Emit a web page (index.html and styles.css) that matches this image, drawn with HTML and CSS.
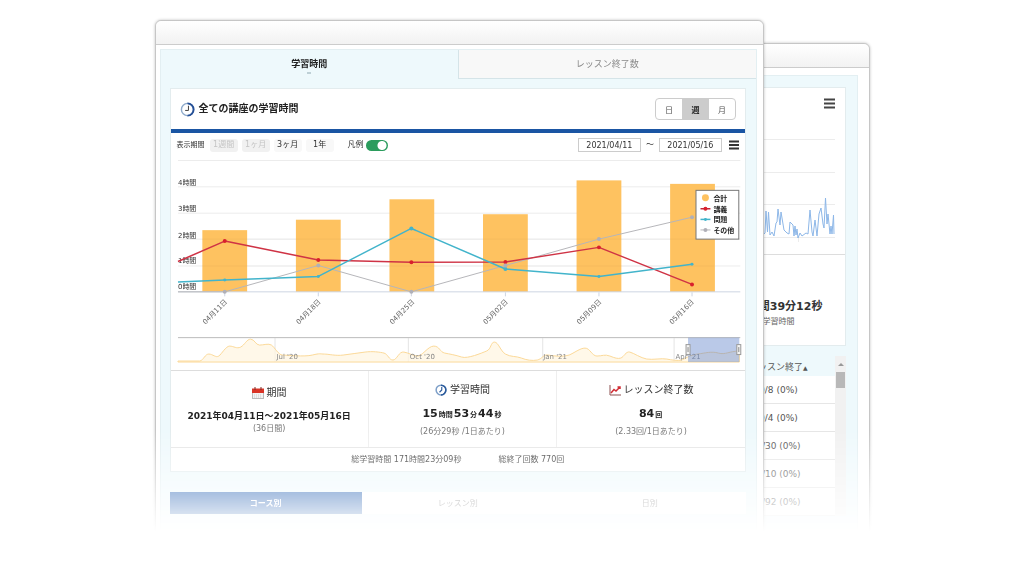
FILE: index.html
```html
<!DOCTYPE html>
<html lang="ja">
<head>
<meta charset="utf-8">
<title>学習時間</title>
<link rel="stylesheet" href="styles.css">
</head>
<body>
<main class="stage">
  <section class="window window-back">
    <div class="titlebar"></div>
    <div class="back-body">
      <div class="back-card">
        <svg class="back-chart" viewBox="676 88 170 166">
          <path d="M825 99.500H836M825 103.500H836M825 107.500H836" stroke="#444" stroke-width="2"/>
          <path d="M676 139.500H836M676 172.500H836M676 204.500H836M676 237.500H836M799.500 237V242" stroke="#ececec"/>
          <path d="M762 225L764 235L766 233L767 211L768.500 232L769.500 212L771 235L773 232L775 236L777 223L778 222L779 209L781 225L782 212L784 224L785 230L788 233L790 234L791 222L794 225L795 236L796 226L797 235L798 229L799 238L801 233L803 236L807 233L809 234L811 210L813 232L814 236L816 220L818 236L820 214L822 208L824 224L825 228L826.500 198L828 224L829 214L831 234L832 226L833 234L834.500 215L835 234" fill="none" stroke="#8db7e8" stroke-linejoin="round"/>
        </svg>
        <div class="back-stat">
          <strong>12時間39分12秒</strong>
          <span>学習時間</span>
        </div>
      </div>
      <div class="back-list">
        <table class="lessons">
          <thead><tr><th>レッスン終了<small>▲</small></th></tr></thead>
          <tbody>
            <tr><td>0/8 (0%)</td></tr>
            <tr><td>0/4 (0%)</td></tr>
            <tr><td>0/30 (0%)</td></tr>
            <tr><td>0/10 (0%)</td></tr>
            <tr><td>0/92 (0%)</td></tr>
          </tbody>
        </table>
        <div class="scroll"><span class="scroll-up"></span><span class="scroll-thumb"></span></div>
      </div>
    </div>
  </section>

  <section class="window window-front">
    <div class="titlebar"></div>
    <div class="front-body">
      <nav class="tabs">
        <button class="tab tab-on">学習時間<span class="caret"></span></button>
        <button class="tab">レッスン終了数</button>
      </nav>
      <article class="card">
        <header class="card-head">
          <svg class="clock" viewBox="0 0 16 16"><circle cx="8" cy="8" r="6.500" fill="#fff" stroke="#8eaacb" stroke-width="1.500"/><path d="M8 1.500a6.500 6.500 0 0 1 0 13" fill="none" stroke="#244f96" stroke-width="2"/><path d="M9 4v5H5.500" fill="none" stroke="#333"/></svg>
          <h1>全ての講座の学習時間</h1>
          <div class="units"><button>日</button><button class="unit-on">週</button><button>月</button></div>
        </header>
        <div class="filters">
          <span class="filter-name">表示期間</span>
          <div class="spans"><button disabled>1週間</button><button disabled>1ヶ月</button><button>3ヶ月</button><button>1年</button></div>
          <label class="legend-switch">凡例<input type="checkbox" checked></label>
          <div class="dates">
            <input type="text" value="2021/04/11" aria-label="開始日"><span>～</span><input type="text" value="2021/05/16" aria-label="終了日">
            <button class="menu" aria-label="メニュー"><svg viewBox="0 0 10 10"><path d="M0 1.500H10M0 5H10M0 8.500H10" stroke="#333" stroke-width="2"/></svg></button>
          </div>
        </div>
        <svg class="chart" viewBox="170 157 577 214">
          <path d="M177 160.500H742M177 187H742M177 213.500H742M177 239.500H742M177 266.500H742" stroke="#ececec"/>
          <g fill="#fec260">
            <rect x="201.500" y="230.500" width="45" height="62"/><rect x="295.500" y="220" width="45" height="72.500"/><rect x="389.500" y="199.500" width="45" height="93"/>
            <rect x="483.500" y="214.500" width="45" height="78"/><rect x="577.500" y="180.500" width="45" height="112"/><rect x="671.500" y="184" width="45" height="108.500"/>
          </g>
          <path d="M201 239.500H716M201 266.500H716" stroke="#000" stroke-opacity=".04"/>
          <path d="M177 292.500H742M224 293v4M318 293v4M411.500 293v4M506 293v4M600 293v4M693.500 293v4" stroke="#cdd5e2"/>
          <g class="axis"><text x="177" y="185">4時間</text><text x="177" y="211">3時間</text><text x="177" y="238">2時間</text><text x="177" y="264">1時間</text><text x="177" y="290">0時間</text></g>
          <g fill="none" stroke-width="1.500" stroke-linejoin="round">
            <path d="M177 292.500H224L318 266L411.500 292.500L506 266L600 239.500L693.500 217.500" stroke="#b5b5b9" stroke-width="1"/>
            <path d="M177 262L224 241.500L318 260.500L411.500 262.800L506 262.500L600 247.800L693.500 285" stroke="#cf3345"/>
            <path d="M177 282.700L224 280.700L318 277L411.500 228.800L506 269.500L600 277L693.500 264.800" stroke="#42b4cb"/>
          </g>
          <g fill="#d9202c"><circle cx="224" cy="241.500" r="2"/><circle cx="318" cy="260.500" r="2"/><circle cx="411.500" cy="262.800" r="2"/><circle cx="506" cy="262.500" r="2"/><circle cx="600" cy="247.800" r="2"/><circle cx="693.500" cy="285" r="2"/></g>
          <g fill="#42b4cb"><circle cx="224" cy="280.700" r="1.500"/><circle cx="318" cy="277" r="1.500"/><circle cx="411.500" cy="228.800" r="2"/><circle cx="506" cy="269.500" r="2"/><circle cx="600" cy="277" r="1.500"/><circle cx="693.500" cy="264.800" r="1.500"/></g>
          <g fill="#b0b0b8"><circle cx="224" cy="292.500" r="2"/><circle cx="318" cy="266" r="2"/><circle cx="411.500" cy="292.500" r="2"/><circle cx="506" cy="266" r="2"/><circle cx="600" cy="239.500" r="2"/><circle cx="693.500" cy="217.500" r="2"/></g>
          <g class="days">
            <text transform="translate(227 303) rotate(-45)">04月11日</text><text transform="translate(321 303) rotate(-45)">04月18日</text><text transform="translate(415 303) rotate(-45)">04月25日</text>
            <text transform="translate(509 303) rotate(-45)">05月02日</text><text transform="translate(603 303) rotate(-45)">05月09日</text><text transform="translate(696 303) rotate(-45)">05月16日</text>
          </g>
          <g class="legend">
            <rect x="697.500" y="190.500" width="43" height="49" fill="#fff" stroke="#777"/>
            <circle cx="707" cy="198" r="3.500" fill="#fec260"/>
            <path d="M702 209H712" stroke="#c52335" stroke-width="1.500"/><circle cx="707" cy="209" r="2" fill="#d9202c"/>
            <path d="M702 219.700H712" stroke="#42b4cb" stroke-width="1.500"/><circle cx="707" cy="219.700" r="1.500" fill="#42b4cb"/>
            <path d="M702 230.300H712" stroke="#b5b5b9"/><circle cx="707" cy="230.300" r="2" fill="#b0b0b8"/>
            <text x="715" y="201">合計</text><text x="715" y="212">講義</text><text x="715" y="222">問題</text><text x="715" y="233">その他</text>
          </g>
          <path d="M274.500 339V363M408.500 339V363M543.500 339V363M675.500 339V363" stroke="#e4e4e4"/>
          <path d="M177 362H199C203 361 204 355 208 355S215 359 218 357S225 347 229 347S236 350 240 348S246 340 250 340S255 346 259 346S268 344 271 346S278 356 282 356S304 358 312 356S320 355 324 355S336 357 343 356S358 354 365 353S380 353 384 354S389 361 393 361S399 352 404 353S412 356 417 357S428 347 434 347S440 353 445 354S456 356 462 358S482 354 487 352S491 343 495 343S501 352 506 355S517 357 522 359S533 362 538 361S544 355 549 356S565 358 570 356S581 349 586 349S593 357 598 357S606 355 611 357S619 360 622 359S627 352 631 353S642 359 648 360S663 359 668 360S680 362 683 361S691 356 699 355S713 352 720 354S731 352 741 352V363H177Z" fill="#fff5e2" fill-opacity=".75" stroke="#fbd998"/>
          <path d="M177 338.500H742" stroke="#bbb"/>
          <g class="months"><text x="276" y="360">Jul '20</text><text x="410" y="360">Oct '20</text><text x="544" y="360">Jan '21</text><text x="677" y="360">Apr '21</text></g>
          <rect x="689.500" y="338.500" width="51.500" height="24.500" fill="#6687cb" fill-opacity=".45"/>
          <g fill="#f4f4f4" stroke="#999"><rect x="687.500" y="345.500" width="4" height="10"/><rect x="738.500" y="345.500" width="4" height="10"/></g>
          <path d="M689.500 348v5M740.500 348v5" stroke="#888"/>
        </svg>
        <div class="stats">
          <section class="stat">
            <h2><svg viewBox="0 0 12 12"><rect x=".5" y="2.500" width="11" height="9" fill="#f3f3f3" stroke="#bbb"/><path d="M0 1.500H12V6H0Z" fill="#d93426"/><path d="M3 0V3M9 0V3" stroke="#7d2a24"/><path d="M2 8H10M2 10H10" stroke="#ccc" stroke-dasharray="1 1"/></svg>期間</h2>
            <p class="period">2021年04月11日～2021年05月16日</p>
            <p class="note">(36日間)</p>
          </section>
          <section class="stat">
            <h2><svg viewBox="0 0 16 16"><circle cx="8" cy="8" r="6.500" fill="#fff" stroke="#7d9fc8" stroke-width="2"/><path d="M8 1.500a6.500 6.500 0 0 1 0 13" fill="none" stroke="#2b5a9b" stroke-width="2"/><path d="M9 4v4L6 11" fill="none" stroke="#2b5a9b" stroke-width="1.500"/></svg>学習時間</h2>
            <p class="total">15<small>時間</small>53<small>分</small>44<small>秒</small></p>
            <p class="note">(26分29秒 /1日あたり)</p>
          </section>
          <section class="stat">
            <h2><svg viewBox="0 0 12 12"><path d="M1 1V11H12" fill="none" stroke="#8d5050"/><path d="M2 9L5 5.500L7 7L11 3M8.500 3H11V5" fill="none" stroke="#d12c34" stroke-width="1.500"/></svg>レッスン終了数</h2>
            <p class="total">84<small>回</small></p>
            <p class="note">(2.33回/1日あたり)</p>
          </section>
        </div>
        <footer class="sums"><span>総学習時間 171時間23分09秒</span><span>総終了回数 770回</span></footer>
      </article>
      <nav class="groups"><button class="group-on">コース別</button><button>レッスン別</button><button>日別</button></nav>
    </div>
  </section>
</main>
</body>
</html>
```

FILE: styles.css
```css
* { box-sizing: border-box; }
body {
  margin: 0;
  background: #fff;
  color: #333;
  font-family: "DejaVu Sans", "Noto Sans CJK JP", sans-serif;
  font-size: 8px;
}
h1, h2, p { margin: 0; }
svg { display: block; flex: none; }
button, input { font: inherit; color: inherit; margin: 0; }
button { padding: 0; border: 0; background: none; }

.stage {
  position: relative;
  height: 540px;
  overflow: hidden;
  -webkit-mask-image: linear-gradient(#000 430px, transparent 532px);
  mask-image: linear-gradient(#000 430px, transparent 532px);
}
.window {
  position: absolute;
  width: 59.5%;
  height: 600px;
  border: 1px solid #c6c6c6;
  border-radius: 6px 6px 0 0;
  background: #fff;
  box-shadow: 0 0 3px rgba(0, 0, 0, .25);
}
.window-back { top: 43px; right: 15%; }
.window-front { top: 20px; left: 15.1%; }
.titlebar {
  height: 24px;
  border-bottom: 1px solid #ccc;
  border-radius: 6px 6px 0 0;
  background: linear-gradient(#fff, #f2f2f2);
}

/* Front window */
.front-body {
  margin: 4px 6px 0 4px;
  padding-bottom: 60px;
  border: 1px solid #e3eff2;
  background: #eef9fc;
}
.tabs { display: flex; height: 29px; }
.tab {
  flex: 1;
  color: #888;
  font-size: 9px;
  line-height: 12px;
  background: #f8f8f8;
  border: solid #d5e4e8;
  border-width: 0 0 1px 1px;
}
.tab-on {
  display: flex;
  flex-direction: column;
  align-items: center;
  padding-top: 8px;
  color: #222;
  font-weight: bold;
  background: none;
  border: 0;
}
.caret { width: 4px; height: 2px; margin-top: 2px; background: #bed0d6; }
.card {
  margin: 9px 10px 0 9px;
  border: 1px solid #e3ecee;
  background: #fff;
}
.card-head {
  display: flex;
  align-items: center;
  gap: 4px;
  height: 44px;
  padding: 0 9px;
  border-bottom: 4px solid #1a55a3;
}
.card-head h1 { flex: 1; font-size: 10px; line-height: 16px; color: #222; }
.clock { width: 15px; height: 15px; }
.units {
  display: flex;
  height: 22px;
  border: 1px solid #ccc;
  border-radius: 4px;
  overflow: hidden;
}
.units button { width: 26px; color: #555; }
.units .unit-on { width: 27px; background: #ccc; color: #222; font-weight: bold; }
.filters {
  display: flex;
  align-items: center;
  height: 24px;
  padding: 0 6px;
  line-height: 12px;
}
.filter-name { font-size: 7px; }
.spans { display: flex; gap: 4px; margin-left: 5px; }
.spans button { width: 28px; height: 13px; border-radius: 3px; background: #f8f8f8; }
.spans button:disabled { color: #c4c4c4; background: #f1f1f1; }
.legend-switch { display: flex; align-items: center; gap: 2px; margin-left: 14px; }
.legend-switch input {
  appearance: none;
  width: 22px;
  height: 11px;
  border-radius: 6px;
  background: radial-gradient(circle at 16px 50%, #fff 4px, transparent 5px), #2b9c5d;
}
.dates { display: flex; align-items: center; margin-left: auto; }
.dates input {
  width: 63px;
  height: 14px;
  padding: 0;
  border: 1px solid #ccc;
  background: #fff;
  text-align: center;
  font-size: 8px;
}
.dates span { width: 18px; text-align: center; }
.menu { width: 10px; height: 10px; margin-left: 7px; }

.chart { width: 100%; height: auto; }
.axis text { font-size: 7px; fill: #333; }
.days text { font-size: 7px; fill: #666; text-anchor: end; }
.legend text { font-size: 7px; font-weight: bold; fill: #222; }
.months text { font-size: 7px; fill: #888; }

.stats { display: flex; border-top: 1px solid #ddd; }
.stat {
  flex: 1;
  height: 76px;
  padding-top: 11px;
  text-align: center;
  border-left: 1px solid #eee;
}
.stat:first-child { flex: 0 0 197px; border-left: 0; padding-top: 14px; }
.stat h2 {
  display: flex;
  align-items: center;
  justify-content: center;
  gap: 3px;
  font-size: 10px;
  line-height: 16px;
  font-weight: normal;
}
.stat h2 svg { width: 12px; height: 12px; }
.period { margin-top: 9px; font-size: 9px; font-weight: bold; line-height: 12px; color: #222; }
.total { margin-top: 9px; font-size: 11px; font-weight: bold; line-height: 14px; color: #222; }
.total small { margin: 0 1px; font-size: 7px; }
.note { line-height: 14px; color: #777; }
.total + .note { margin-top: 3px; }
.sums {
  display: flex;
  justify-content: center;
  gap: 37px;
  border-top: 1px solid #e6e6e6;
  line-height: 23px;
  font-size: 8px;
}
.groups { display: flex; margin: 20px 10px 0 9px; background: #fff; }
.groups button { flex: 1; height: 22px; color: #777; }
.groups .group-on { background: #1c59ae; color: #fff; font-weight: bold; }

/* Back window */
.back-body {
  height: 500px;
  margin: 7px 11px 0;
  padding: 11px 11px 0;
  border: 1px solid #e3eff2;
  background: #eef9fc;
}
.back-card {
  display: flex;
  flex-direction: column;
  height: 259px;
  border: 1px solid #e3ecee;
  background: #fff;
}
.back-chart { width: 170px; height: 166px; margin-left: auto; }
.back-stat {
  display: flex;
  flex-direction: column;
  align-items: flex-end;
  flex: 1;
  padding: 44px 23px 0 0;
  border-top: 1px solid #ddd;
}
.back-stat strong { font-size: 11px; line-height: 16px; }
.back-stat span { margin-right: 28px; line-height: 14px; color: #666; }
.back-list { display: flex; justify-content: flex-end; margin-top: 10px; }
.lessons { width: 112px; border-collapse: separate; border-spacing: 0; text-align: center; }
.lessons th { padding: 0 2px 0 0; height: 20px; font-size: 9px; font-weight: normal; color: #555; }
.lessons th small { font-size: 6px; }
.lessons td {
  height: 28px;
  padding: 0 2px 0 0;
  border-bottom: 1px solid #e6e6e6;
  background: #fff;
  font-size: 9px;
  color: #555;
}
.scroll { display: flex; flex-direction: column; align-items: center; width: 11px; background: #f1f1f1; }
.scroll-up { margin: 7px 0 6px; border: solid transparent; border-width: 0 3px 3px; border-bottom-color: #999; }
.scroll-thumb { width: 9px; height: 16px; background: #b8b8b8; }
```
